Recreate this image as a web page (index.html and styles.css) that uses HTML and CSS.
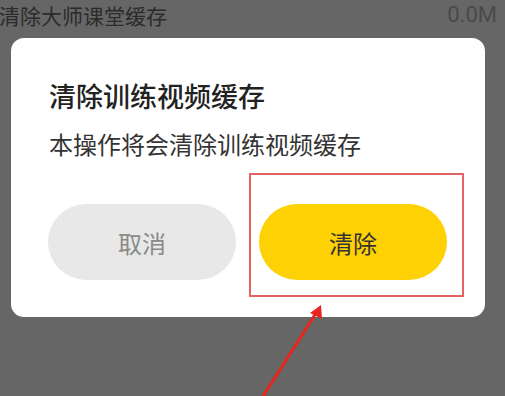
FILE: index.html
```html
<!DOCTYPE html>
<html lang="zh">
<head>
<meta charset="utf-8">
<link rel="stylesheet" href="styles.css">
</head>
<body>
<div class="screen">
  <div class="row">
    <span class="row-label">清除大师课堂缓存</span>
    <span class="row-value">0.0M</span>
  </div>
  <div class="dialog">
    <div class="title">清除训练视频缓存</div>
    <div class="message">本操作将会清除训练视频缓存</div>
    <div class="actions">
      <div class="btn btn-cancel">取消</div>
      <div class="btn btn-ok">清除</div>
    </div>
  </div>
  <div class="highlight"></div>
  <svg class="arrow" width="505" height="396" viewBox="0 0 505 396">
    <line x1="262" y1="398" x2="316" y2="313" stroke="#e8251f" stroke-width="3" stroke-linecap="round"/>
    <polygon points="321,305 322,319 310,313" fill="#e8251f"/>
  </svg>
</div>
</body>
</html>
```

FILE: styles.css
```css
html, body {
  margin: 0;
  padding: 0;
}
body {
  background: #666666;
  font-family: "Noto Sans CJK SC", "Noto Sans", sans-serif;
  width: 505px;
  height: 396px;
  overflow: hidden;
}
.screen {
  position: relative;
  width: 505px;
  height: 396px;
}
.row {
  display: flex;
  justify-content: space-between;
  align-items: center;
  height: 38px;
  padding: 0 8px 0 0;
  box-sizing: border-box;
}
.row-label {
  font-size: 21px;
  line-height: 30px;
  color: #2b2b2b;
  margin-top: -8px;
  margin-left: -1px;
}
.row-value {
  font-family: "Roboto", "Noto Sans", sans-serif;
  font-size: 22px;
  line-height: 30px;
  color: #4a4a4a;
  margin-top: -8px;
}
.dialog {
  margin-left: 11px;
  width: 474px;
  height: 279px;
  background: #ffffff;
  border-radius: 13px;
  box-sizing: border-box;
  padding: 42px 37px 0 37px;
  display: flex;
  flex-direction: column;
}
.title {
  font-size: 27px;
  line-height: 32px;
  font-weight: 500;
  color: #222222;
  padding-left: 1px;
}
.message {
  margin-top: 17px;
  font-size: 24px;
  line-height: 29px;
  color: #333333;
  padding-left: 1px;
}
.actions {
  margin-top: 46px;
  display: flex;
  gap: 23px;
}
.btn {
  width: 188px;
  height: 76px;
  border-radius: 38px;
  display: flex;
  align-items: center;
  justify-content: center;
  font-size: 24px;
}
.btn-cancel {
  background: #e8e8e8;
  color: #8a8a8a;
}
.btn-ok {
  background: #fdd104;
  color: #333333;
}
.highlight {
  position: absolute;
  left: 249px;
  top: 173px;
  width: 215px;
  height: 124px;
  box-sizing: border-box;
  border: 2px solid #e36464;
}
.arrow {
  position: absolute;
  left: 0;
  top: 0;
}
```
